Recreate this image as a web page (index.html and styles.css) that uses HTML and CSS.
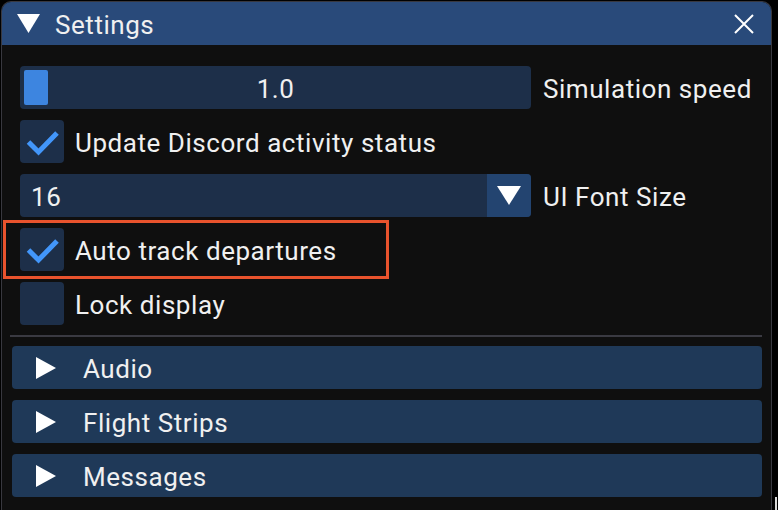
FILE: index.html
```html
<!DOCTYPE html>
<html>
<head>
<meta charset="utf-8">
<link rel="stylesheet" href="styles.css">
</head>
<body>
<div class="window">
  <div class="titlebar">
    <svg class="title-arrow" width="23" height="19" viewBox="0 0 23 19"><polygon points="0,0 23,0 11.5,19" fill="#fff"/></svg>
    <span class="title-text">Settings</span>
    <svg class="close" width="22" height="22" viewBox="0 0 22 22"><path d="M2 2 L20 20 M20 2 L2 20" stroke="#fff" stroke-width="2"/></svg>
  </div>
  <div class="content">
    <div class="row">
      <div class="slider"><div class="grab"></div><span class="txt">1.0</span></div>
      <span class="txt">Simulation speed</span>
    </div>
    <div class="row">
      <div class="checkbox"><svg width="44" height="43" viewBox="0 0 44 43"><polyline points="8.5,22 18.5,32 37,13" fill="none" stroke="#4296fa" stroke-width="5"/></svg></div>
      <span class="txt">Update Discord activity status</span>
    </div>
    <div class="row">
      <div class="combo"><span class="txt combo-value">16</span><div class="combo-btn"><svg width="24" height="19" viewBox="0 0 24 19"><polygon points="0,0 24,0 12,19" fill="#fff"/></svg></div></div>
      <span class="txt">UI Font Size</span>
    </div>
    <div class="row">
      <div class="checkbox"><svg width="44" height="43" viewBox="0 0 44 43"><polyline points="8.5,22 18.5,32 37,13" fill="none" stroke="#4296fa" stroke-width="5"/></svg></div>
      <span class="txt">Auto track departures</span>
    </div>
    <div class="row">
      <div class="checkbox"></div>
      <span class="txt">Lock display</span>
    </div>
  </div>
  <div class="separator"></div>
  <div class="headers">
    <div class="header"><svg class="hdr-arrow" width="20" height="22" viewBox="0 0 20 22"><polygon points="0,0 20,11 0,22" fill="#fff"/></svg><span class="txt">Audio</span></div>
    <div class="header"><svg class="hdr-arrow" width="20" height="22" viewBox="0 0 20 22"><polygon points="0,0 20,11 0,22" fill="#fff"/></svg><span class="txt">Flight Strips</span></div>
    <div class="header"><svg class="hdr-arrow" width="20" height="22" viewBox="0 0 20 22"><polygon points="0,0 20,11 0,22" fill="#fff"/></svg><span class="txt">Messages</span></div>
  </div>
</div>
<div class="highlight"></div>
<div class="grip"></div>
</body>
</html>
```
FILE: styles.css
```css
* { box-sizing: border-box; margin: 0; padding: 0; }
html, body { background: #000; }
body {
  width: 778px;
  height: 510px;
  overflow: hidden;
  position: relative;
  font-family: Roboto, "Liberation Sans", sans-serif;
  font-size: 26px;
  letter-spacing: 0.55px;
  color: #f0f0f0;
}
.window {
  margin: 1px 0 0 1px;
  width: 771px;
  height: 509px;
  border: 1px solid #38383f;
  border-bottom: none;
  border-radius: 10px 10px 0 0;
  background: #0f0f0f;
  overflow: hidden;
}
.txt {
  display: block;
  height: 43px;
  line-height: 43px;
  padding-top: 2px;
  white-space: nowrap;
}
.titlebar {
  height: 43px;
  background: #294a7a;
  display: flex;
  align-items: center;
  padding-left: 15px;
  padding-right: 16px;
}
.title-arrow { flex: none; }
.title-text { margin-left: 15px; flex: 1; height: 43px; line-height: 43px; padding-top: 2px; }
.close { flex: none; }
.content {
  padding: 21px 0 0 18px;
  display: flex;
  flex-direction: column;
  gap: 11px;
}
.row {
  display: flex;
  align-items: center;
  height: 43px;
}
.slider {
  width: 511px;
  height: 43px;
  background: #1d2f49;
  border-radius: 4px;
  position: relative;
  display: flex;
  align-items: center;
  justify-content: center;
  margin-right: 12px;
}
.grab {
  position: absolute;
  left: 4px;
  top: 4px;
  width: 24px;
  height: 35px;
  background: #3d85e0;
  border-radius: 2px;
}
.checkbox {
  width: 44px;
  height: 43px;
  background: #1d2f49;
  border-radius: 4px;
  margin-right: 11px;
  flex: none;
}
.checkbox svg { display: block; }
.combo {
  width: 511px;
  height: 43px;
  display: flex;
  background: #1d2f49;
  border-radius: 4px;
  overflow: hidden;
  margin-right: 12px;
}
.combo-value { flex: 1; padding-left: 11px; }
.combo-btn {
  width: 44px;
  background: #234470;
  display: flex;
  align-items: center;
  justify-content: center;
}
.separator {
  margin: 10px 0 0 8px;
  width: 752px;
  height: 2px;
  background: #3a3a42;
}
.headers {
  padding: 9px 0 0 10px;
  display: flex;
  flex-direction: column;
  gap: 11px;
}
.header {
  width: 750px;
  height: 43px;
  background: #1f3958;
  border-radius: 4px;
  display: flex;
  align-items: center;
  padding-left: 24px;
}
.hdr-arrow { flex: none; margin-right: 27px; }
.highlight {
  position: absolute;
  left: 3px;
  top: 220px;
  width: 386px;
  height: 59px;
  border: 3px solid #e9532d;
}
.grip {
  position: absolute;
  left: 775px;
  top: 497px;
  width: 2px;
  height: 13px;
  background: #d8d8d8;
}
```
